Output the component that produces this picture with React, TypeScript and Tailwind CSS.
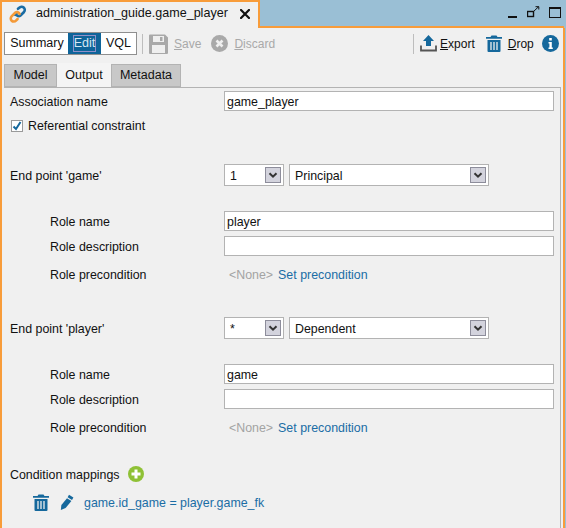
import React from 'react';

const BLUE = '#15689c';

const LinkIcon = () => (
  <svg width="18" height="18" viewBox="0 0 18 18" fill="none" strokeWidth="2.6" strokeLinecap="round">
    <path d="M7.5 8.5 L6.2 9.8 M9 3.8 L10.2 2.8 A3 3 0 0 1 15 7 L11.5 10.5 A2.8 2.8 0 0 1 7.2 9.5" stroke="#1b6ca3" />
    <path d="M10.6 9 A2.8 2.8 0 0 0 6.4 7.6 L2.6 11.4 A3 3 0 0 0 7 15.6 L8.6 14" stroke="#f49a38" />
  </svg>
);

const CloseIcon = () => (
  <svg width="10" height="10" viewBox="0 0 10 10" stroke="#111" strokeWidth="2.2" strokeLinecap="square" className="block">
    <path d="M1 1 L9 9 M9 1 L1 9" />
  </svg>
);

const SaveIcon = () => (
  <svg width="19" height="20" viewBox="0 0 19 20" className="block">
    <path d="M0 1.5 A1 1 0 0 1 1 .5 H16 L19 3.5 V19 A1 1 0 0 1 18 20 H1 A1 1 0 0 1 0 19 Z" fill="#a9a9a9" />
    <rect x="4" y="2" width="11" height="6" fill="#efefef" />
    <rect x="11" y="3" width="2.5" height="4" fill="#a9a9a9" />
    <rect x="3" y="11" width="13" height="8" fill="#efefef" />
  </svg>
);

const DiscardIcon = () => (
  <svg width="17" height="17" viewBox="0 0 17 17" className="block">
    <circle cx="8.5" cy="8.5" r="8.5" fill="#a9a9a9" />
    <path d="M5.5 5.5 L11.5 11.5 M11.5 5.5 L5.5 11.5" stroke="#efefef" strokeWidth="2.6" />
  </svg>
);

const ExportIcon = () => (
  <svg width="17" height="17" viewBox="0 0 17 17" className="block">
    <path d="M8.5 0 L14 6 H11 V11 H6 V6 H3 Z" fill={BLUE} />
    <path d="M1 10.5 V15.5 H16 V10.5" fill="none" stroke="#555" strokeWidth="1.8" />
  </svg>
);

const TrashIcon = () => (
  <svg width="16" height="17" viewBox="0 0 16 17" className="block">
    <path d="M5.5 0.5 H10.5 L11.5 2 H16 V3.8 H0 V2 H4.5 Z" fill={BLUE} />
    <path d="M1.5 5 H14.5 V16 A1 1 0 0 1 13.5 17 H2.5 A1 1 0 0 1 1.5 16 Z" fill={BLUE} />
    <path d="M5 7 V15 M8 7 V15 M11 7 V15" stroke="#efefef" strokeWidth="1.3" />
  </svg>
);

const InfoIcon = () => (
  <svg width="17" height="17" viewBox="0 0 17 17" className="block">
    <circle cx="8.5" cy="8.5" r="8.5" fill={BLUE} />
    <rect x="7.2" y="3" width="2.6" height="2.5" fill="#fff" />
    <path d="M6.5 7 H9.8 V12.5 H10.8 V14 H6.5 V12.5 H7.4 V8.5 H6.5 Z" fill="#fff" />
  </svg>
);

const PlusIcon = () => (
  <svg width="16" height="16" viewBox="0 0 16 16" className="block">
    <circle cx="8" cy="8" r="8" fill="#8fc136" />
    <path d="M8 3.5 V12.5 M3.5 8 H12.5" stroke="#fff" strokeWidth="3" />
  </svg>
);

const PencilIcon = () => (
  <svg width="14" height="16" viewBox="0 0 14 16" className="block">
    <path d="M9 0.8 L13.4 3.4 L12 5.9 L7.6 3.3 Z" fill={BLUE} />
    <path d="M7 4.3 L11.4 6.9 L5.6 14 L0.8 16 L1.4 11 Z" fill={BLUE} />
  </svg>
);

const Arrow = () => (
  <span className="flex h-[16px] w-[16px] items-center justify-center border border-[#8d8d9b] bg-[#d3d3dd]">
    <svg width="10" height="7" viewBox="0 0 10 7" fill="none" stroke="#333" strokeWidth="2">
      <path d="M1.5 1.2 L5 4.7 L8.5 1.2" />
    </svg>
  </span>
);

const Input = ({ value }: { value?: string }) => (
  <div className="flex h-[20px] w-[330px] items-center border border-[#b3b3b3] bg-white pl-[2px] pt-[2px]">{value}</div>
);

const Select = ({ value, width }: { value: string; width: string }) => (
  <div className={`flex h-[22px] items-center justify-between border border-[#b3b3b3] bg-white pl-[5px] pr-[2px] ${width}`}>
    <span className="pt-[2px]">{value}</span>
    <Arrow />
  </div>
);

const Precondition = () => (
  <div className="flex h-[20px] items-center pl-[5px] pt-[2px]">
    <span className="text-[#a3a3a3]">&lt;None&gt;</span>
    <span className="ml-[5px] text-[#1a6da5]">Set precondition</span>
  </div>
);

const EndPoint = ({ name, card, kind, role, top }: { name: string; card: string; kind: string; role: string; top: string }) => (
  <div className={top}>
    <div className="flex h-[22px] items-center">
      <span className="w-[214px] pt-[2px]">End point '{name}'</span>
      <div className="flex gap-[5px]">
        <Select value={card} width="w-[60px]" />
        <Select value={kind} width="w-[200px]" />
      </div>
    </div>
    <div className="mt-[25px] flex h-[20px] items-center pl-[40px]">
      <span className="w-[174px] pt-[2px]">Role name</span>
      <Input value={role} />
    </div>
    <div className="mt-[5px] flex h-[20px] items-center pl-[40px]">
      <span className="w-[174px] pt-[2px]">Role description</span>
      <Input />
    </div>
    <div className="mt-[8px] flex h-[20px] items-center pl-[40px]">
      <span className="w-[174px] pt-[2px]">Role precondition</span>
      <Precondition />
    </div>
  </div>
);

export default function App() {
  return (
    <div className="flex h-[528px] w-[566px] flex-col overflow-hidden bg-[#9abfd5] font-['Liberation_Sans',Arial,sans-serif] text-[12.4px] leading-none text-[#111]">
      <div className="flex h-[28px] shrink-0">
        <div className="flex h-[28px] w-[260px] items-center border-r-2 border-l-2 border-t-2 border-[#f89c3a] bg-[#f0f0f0] pb-[3px] pl-[7px] text-[12.55px]">
          <LinkIcon />
          <span className="ml-[9px]">administration_guide.game_player</span>
          <span className="ml-auto mr-[8px]"><CloseIcon /></span>
        </div>
        <div className="relative flex h-[28px] w-[304px] items-start border-b-2 border-[#f89c3a]">
          <div className="ml-auto mr-[3px] mt-[6px] flex items-center gap-[9px]">
            <span className="mt-[9px] h-[2px] w-[9px] bg-[#111]" />
            <svg width="13" height="12" viewBox="0 0 13 12" fill="none" stroke="#111" className="ml-px">
              <rect x="0.5" y="5.5" width="6" height="5" strokeWidth="1.4" />
              <path d="M6.5 5.5 L11.5 0.8 M8.5 0.7 H11.8 V3.5" strokeWidth="1" />
            </svg>
            <span className="h-[11px] w-[12px] border-2 border-[#111] border-b-[1.5px] border-l-[1.5px] border-r-[1.5px]" />
          </div>
        </div>
      </div>

      <div className="flex min-h-0 w-[565px] flex-1 flex-col border-r-2 border-l-2 border-[#f89c3a] bg-[#f0f0f0] pl-[2px] pr-[1px]">
        <div className="flex h-[36px] shrink-0 items-center pb-[5px] text-[12px]">
          <div className="flex h-[23px] w-[133px] border border-[#8f8f8f] bg-white text-[12.5px]">
            <span className="flex w-[63px] items-center justify-center pl-px">Summary</span>
            <span className="flex w-[33px] items-center justify-center bg-[#0e6499] text-[#d5e8f3]">
              <span className="flex h-[17px] w-[23px] items-center justify-center border border-[#8f8fc8]">Edit</span>
            </span>
            <span className="flex w-[35px] items-center justify-center">VQL</span>
          </div>
          <span className="ml-[5px] h-[20px] w-px bg-[#bdbdbd]" />
          <span className="ml-[6px]"><SaveIcon /></span>
          <span className="ml-[6px] text-[#a9a9a9]"><span className="underline">S</span>ave</span>
          <span className="ml-[10px]"><DiscardIcon /></span>
          <span className="ml-[6px] text-[#a9a9a9]"><span className="underline">D</span>iscard</span>
          <span className="ml-[138px] h-[20px] w-px bg-[#bdbdbd]" />
          <span className="ml-[6px]"><ExportIcon /></span>
          <span className="ml-[3px]"><span className="underline">E</span>xport</span>
          <span className="ml-[11px]"><TrashIcon /></span>
          <span className="ml-[6px]"><span className="underline">D</span>rop</span>
          <span className="ml-[8px]"><InfoIcon /></span>
        </div>

        <div className="flex h-[23px] shrink-0 items-end text-[12.5px]">
          <span className="flex h-[23px] w-[53px] items-center justify-center border border-[#b3b3b3] bg-[#c8c8c8]">Model</span>
          <span className="flex h-[24px] w-[54px] items-center justify-center bg-[#f4f4f4]">Output</span>
          <span className="flex h-[23px] w-[70px] items-center justify-center border border-[#b3b3b3] bg-[#c8c8c8]">Metadata</span>
        </div>

        <div className="w-[557px] flex-1 border-r border-t border-[#b3b3b3] pl-[6px] pt-[3px]">
          <div className="flex h-[20px] items-center">
            <span className="w-[214px] pt-[2px]">Association name</span>
            <Input value="game_player" />
          </div>
          <div className="mt-[6px] flex h-[17px] items-center pl-px">
            <span className="flex h-[12px] w-[12px] items-center justify-center border border-[#9a9a9a] bg-white">
              <svg width="10" height="10" viewBox="0 0 10 10" fill="none" stroke={BLUE} strokeWidth="2">
                <path d="M1.5 5.5 L4 8 L8.5 1" />
              </svg>
            </span>
            <span className="ml-[5px] pt-[2px]">Referential constraint</span>
          </div>
          <EndPoint top="mt-[30px]" name="game" card="1" kind="Principal" role="player" />
          <EndPoint top="mt-[33px]" name="player" card="*" kind="Dependent" role="game" />
          <div className="mt-[27px] flex h-[20px] items-center">
            <span className="pt-[2px]">Condition mappings</span>
            <span className="ml-[8px]"><PlusIcon /></span>
          </div>
          <div className="mt-[8px] flex h-[20px] items-center pl-[23px]">
            <TrashIcon />
            <span className="ml-[11px]"><PencilIcon /></span>
            <span className="ml-[10px] pt-[2px] text-[#1a6da5]">game.id_game = player.game_fk</span>
          </div>
        </div>
      </div>
    </div>
  );
}
